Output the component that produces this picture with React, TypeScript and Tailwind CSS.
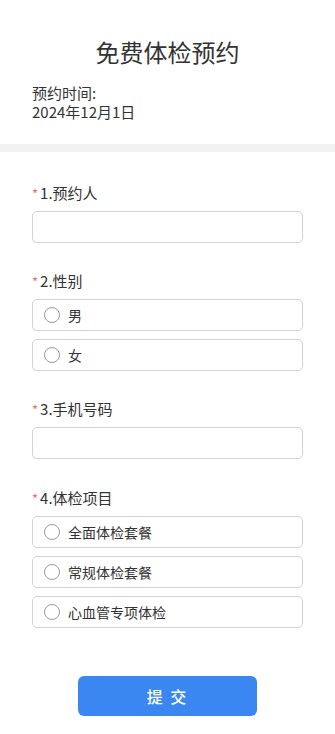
import { useState } from "react";

const genders = ["男", "女"];
const packages = ["全面体检套餐", "常规体检套餐", "心血管专项体检"];

function Label({ text }: { text: string }) {
  return (
    <div className="flex items-start h-[22px] leading-[22px] text-[15px] text-[#333] mb-[7px]">
      <span className="text-[#f56c6c] text-[13px] leading-[18px] mt-[3px] mr-[2px]">*</span>
      <span>{text}</span>
    </div>
  );
}

function RadioRow({ label, checked, onClick }: { label: string; checked: boolean; onClick: () => void }) {
  return (
    <button
      type="button"
      onClick={onClick}
      className="flex items-center w-full h-[32px] border border-[#d2d2d2] rounded-[5px] pl-[11px] text-left bg-white"
    >
      <span className="flex items-center justify-center w-[16px] h-[16px] rounded-full border border-[#9a9a9a]">
        {checked && <span className="w-[8px] h-[8px] rounded-full bg-[#3a87f2]" />}
      </span>
      <span className="ml-[8px] text-[14px] text-[#333]">{label}</span>
    </button>
  );
}

export default function App() {
  const [gender, setGender] = useState<string>("");
  const [pkg, setPkg] = useState<string>("");

  return (
    <div
      className="w-[335px] min-h-[734px] bg-white text-[#333]"
      style={{ fontFamily: '"Noto Sans CJK SC", "Noto Sans", sans-serif' }}
    >
      <div className="pt-[34px] pb-[23px] px-8">
        <h1 className="text-center text-[24px] leading-[36px] font-normal text-[#333]">免费体检预约</h1>
        <div className="mt-[13px] text-[15px] leading-[19px] text-[#333]">
          <p>预约时间:</p>
          <p>2024年12月1日</p>
        </div>
      </div>

      <div className="h-[8px] bg-[#f2f2f2]" />

      <div className="px-8 pt-[30px]">
        <div>
          <Label text="1.预约人" />
          <input className="w-full h-[32px] border border-[#d2d2d2] rounded-[5px] px-3 text-[14px] outline-none" />
        </div>

        <div className="mt-[27px]">
          <Label text="2.性别" />
          <div className="flex flex-col gap-[8px]">
            {genders.map((g) => (
              <RadioRow key={g} label={g} checked={gender === g} onClick={() => setGender(g)} />
            ))}
          </div>
        </div>

        <div className="mt-[27px]">
          <Label text="3.手机号码" />
          <input className="w-full h-[32px] border border-[#d2d2d2] rounded-[5px] px-3 text-[14px] outline-none" />
        </div>

        <div className="mt-[28px]">
          <Label text="4.体检项目" />
          <div className="flex flex-col gap-[8px]">
            {packages.map((p) => (
              <RadioRow key={p} label={p} checked={pkg === p} onClick={() => setPkg(p)} />
            ))}
          </div>
        </div>

        <div className="flex justify-center pt-[48px] pb-[17px]">
          <button
            type="button"
            className="w-[179px] h-[40px] rounded-[6px] bg-[#3a87f2] text-white text-[16px] font-medium tracking-[2px]"
          >
            提 交
          </button>
        </div>
      </div>
    </div>
  );
}
